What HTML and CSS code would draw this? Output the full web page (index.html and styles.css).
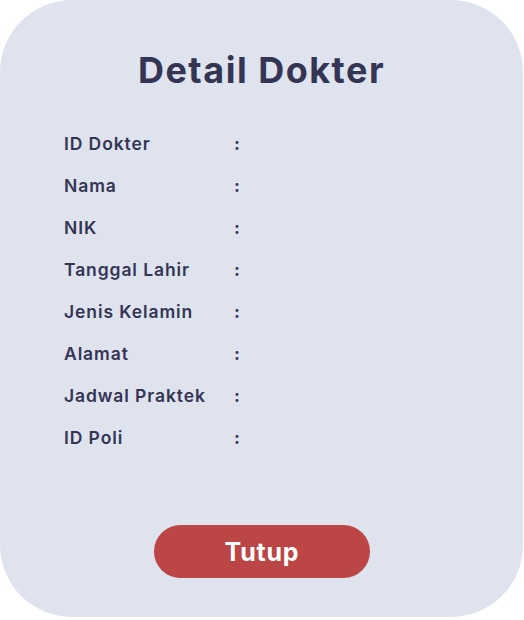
FILE: index.html
```html
<!DOCTYPE html>
<html>
<head>
<meta charset="utf-8">
<link rel="stylesheet" href="styles.css">
</head>
<body>
<div class="card">
  <h1 class="title">Detail Dokter</h1>
  <div class="rows">
    <div class="row"><span class="label">ID Dokter</span><span class="colon">:</span></div>
    <div class="row"><span class="label">Nama</span><span class="colon">:</span></div>
    <div class="row"><span class="label">NIK</span><span class="colon">:</span></div>
    <div class="row"><span class="label">Tanggal Lahir</span><span class="colon">:</span></div>
    <div class="row"><span class="label">Jenis Kelamin</span><span class="colon">:</span></div>
    <div class="row"><span class="label">Alamat</span><span class="colon">:</span></div>
    <div class="row"><span class="label">Jadwal Praktek</span><span class="colon">:</span></div>
    <div class="row"><span class="label">ID Poli</span><span class="colon">:</span></div>
  </div>
  <div class="actions">
    <button class="btn">Tutup</button>
  </div>
</div>
</body>
</html>
```
FILE: styles.css
```css
html, body {
  margin: 0;
  padding: 0;
  background: #ffffff;
}
body {
  font-family: "Inter", "Open Sans", sans-serif;
  color: #343554;
}
.card {
  width: 523px;
  height: 617px;
  background: #dfe3ee;
  border-radius: 72px;
  box-sizing: border-box;
  padding-top: 48px;
  display: flex;
  flex-direction: column;
}
.title {
  margin: 0;
  text-align: center;
  font-size: 36px;
  font-weight: 700;
  line-height: 44px;
  letter-spacing: 1.5px;
}
.rows {
  margin-top: 30px;
  padding-left: 64px;
  display: flex;
  flex-direction: column;
}
.row {
  display: flex;
  height: 42px;
  align-items: center;
  font-size: 17.5px;
  font-weight: 600;
  letter-spacing: 0.9px;
}
.label {
  width: 170px;
}
.colon {
  font-weight: 700;
}
.actions {
  margin-top: auto;
  margin-bottom: 39px;
  display: flex;
  justify-content: center;
  padding-left: 1px;
}
.btn {
  width: 216px;
  height: 53px;
  border: none;
  border-radius: 27px;
  background: #bc4545;
  color: #ffffff;
  font-family: "Inter", sans-serif;
  font-size: 25px;
  font-weight: 700;
  letter-spacing: 0.8px;
  padding: 0;
}
```
